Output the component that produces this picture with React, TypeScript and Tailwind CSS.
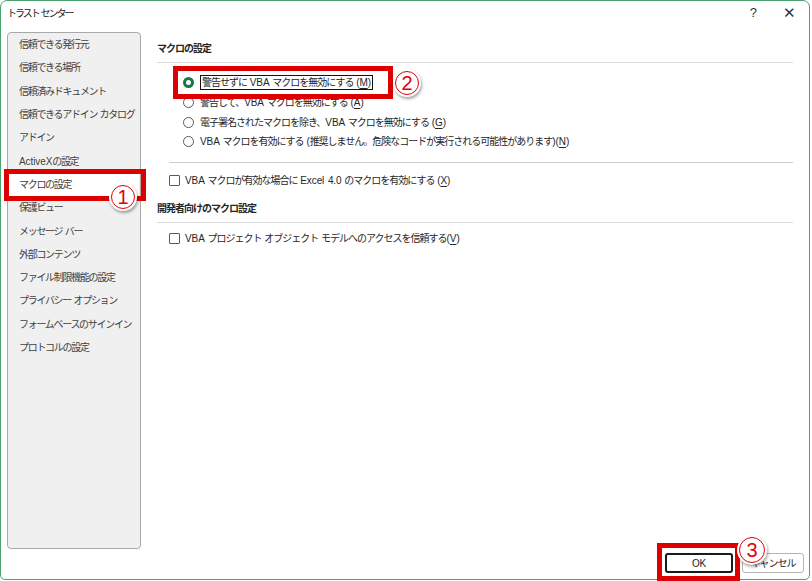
import type { ReactNode } from "react";

const menu: ReactNode[] = [
  "信頼できる発行元",
  "信頼できる場所",
  "信頼済みドキュメント",
  "信頼できるアドイン カタログ",
  "アドイン",
  <>
    <L>ActiveX</L> の設定
  </>,
  "マクロの設定",
  "保護ビュー",
  "メッセージ バー",
  "外部コンテンツ",
  "ファイル制限機能の設定",
  "プライバシー オプション",
  "フォームベースのサインイン",
  "プロトコルの設定",
];

function L({ children }: { children: ReactNode }) {
  return <span className="tracking-[-0.1px]">{children}</span>;
}

function Key({ k }: { k: string }) {
  return (
    <L>
      (<span className="underline underline-offset-2">{k}</span>)
    </L>
  );
}

function Radio({ checked, children }: { checked?: boolean; children: ReactNode }) {
  return (
    <div className="flex h-[19.7px] items-center gap-[6px]">
      {checked ? (
        <span className="h-[11px] w-[11px] shrink-0 rounded-full border-[3px] border-[#157a3f] bg-white" />
      ) : (
        <span className="h-[11px] w-[11px] shrink-0 rounded-full border border-[#5a5a5a] bg-white" />
      )}
      <span className="whitespace-nowrap">{children}</span>
    </div>
  );
}

function Check({ children }: { children: ReactNode }) {
  return (
    <div className="flex h-[20px] items-center gap-[5px] pl-[12px]">
      <span className="h-[11px] w-[11px] shrink-0 rounded-[1px] border border-[#5a5a5a] bg-white" />
      <span className="whitespace-nowrap">{children}</span>
    </div>
  );
}

function Badge({ n, className }: { n: string; className: string }) {
  return (
    <div
      className={
        "absolute flex items-center justify-center rounded-full bg-white shadow-[1px_2px_3px_rgba(0,0,0,0.35)] " +
        className
      }
    >
      <div className="flex h-[85%] w-[85%] items-center justify-center rounded-full border-[1.5px] border-[#e0000b] font-['Liberation_Sans',sans-serif] text-[20px] leading-none tracking-normal text-[#e0000b]">
        {n}
      </div>
    </div>
  );
}

export default function App() {
  return (
    <div className="relative h-[581px] w-[812px] bg-white font-['Liberation_Sans','Noto_Sans_CJK_JP',sans-serif] text-[10px] tracking-[-1px] text-[#262626] [word-spacing:1px]">
      <div className="flex h-[580px] w-[810px] flex-col rounded-t-[7px] rounded-b-[5px] border border-[#4aa36f]">
        {/* title bar */}
        <div className="flex h-[24px] items-center pl-[6px] pr-[14px]">
          <span className="tracking-[-2px] text-[#1a1a1a]">トラスト センター</span>
          <span className="ml-auto text-[13px] text-[#333]">?</span>
          <span className="ml-[27px] text-[15px] font-light text-[#333]">✕</span>
        </div>

        <div className="flex flex-1 pt-[7px]">
          {/* sidebar */}
          <div className="pb-[30px] pl-[6px]">
            <div className="flex h-[517px] w-[134px] flex-col rounded-[4px] border border-[#a8a8a8] bg-[#f0f0f0] px-[1px] tracking-[-1.3px] text-[#404040]">
              {menu.map((m, i) => (
                <div
                  key={i}
                  className={"flex h-[23.3px] items-center whitespace-nowrap pl-[10px] " + (i === 6 ? "bg-white" : "")}
                >
                  {m}
                </div>
              ))}
            </div>
          </div>

          {/* content */}
          <div className="flex flex-1 flex-col pl-[16px] pr-[16px]">
            <div className="mt-[9px] border-b border-[#dadada] pb-[5px] font-bold leading-[16px]">マクロの設定</div>
            <div className="mt-[10px] pl-[26px]">
              <Radio checked>
                <span className="border border-[#111] px-[1px] py-[1px]">
                  警告せずに <L>VBA</L> マクロを無効にする <Key k="M" />
                </span>
              </Radio>
              <Radio>
                警告して、<L>VBA</L> マクロを無効にする <Key k="A" />
              </Radio>
              <Radio>
                電子署名されたマクロを除き、<L>VBA</L> マクロを無効にする <Key k="G" />
              </Radio>
              <Radio>
                <L>VBA</L> マクロを有効にする <L>(</L>推奨しません。危険なコードが実行される可能性があります<L>)</L>
                <Key k="N" />
              </Radio>
            </div>
            <div className="ml-[12px] mt-[10px] border-b border-[#cfcfcf]" />
            <div className="mt-[8px]">
              <Check>
                <L>VBA</L> マクロが有効な場合に <L>Excel 4.0</L> のマクロを有効にする <Key k="X" />
              </Check>
            </div>
            <div className="mt-[10px] border-b border-[#dadada] pb-[5px] font-bold leading-[16px]">
              開発者向けのマクロ設定
            </div>
            <div className="mt-[6px]">
              <Check>
                <L>VBA</L> プロジェクト オブジェクト モデルへのアクセスを信頼する<Key k="V" />
              </Check>
            </div>

            <div className="mt-auto -mr-[11px] flex justify-end gap-[9px] pb-[6px]">
              <button className="flex h-[20px] w-[68px] items-center justify-center rounded-[3px] border-2 border-[#1b1b1b] bg-white text-[#1a1a1a]">
                <L>OK</L>
              </button>
              <button className="flex h-[20px] w-[62px] items-center justify-center rounded-[3px] border border-[#b5b5b5] bg-white text-[#1a1a1a]">
                キャンセル
              </button>
            </div>
          </div>
        </div>
      </div>

      {/* annotations */}
      <div className="absolute left-[4px] top-[169px] h-[32px] w-[142px] border-[5px] border-[#dc0000]" />
      <div className="absolute left-[173px] top-[66px] h-[33px] w-[220px] border-[5px] border-[#dc0000]" />
      <div className="absolute left-[657px] top-[543px] h-[38px] w-[83px] border-[5px] border-[#dc0000]" />
      <Badge n="1" className="left-[109px] top-[183px] h-[28px] w-[28px]" />
      <Badge n="2" className="left-[393px] top-[69px] h-[28px] w-[28px]" />
      <Badge n="3" className="left-[737px] top-[535px] h-[30px] w-[30px]" />
    </div>
  );
}
